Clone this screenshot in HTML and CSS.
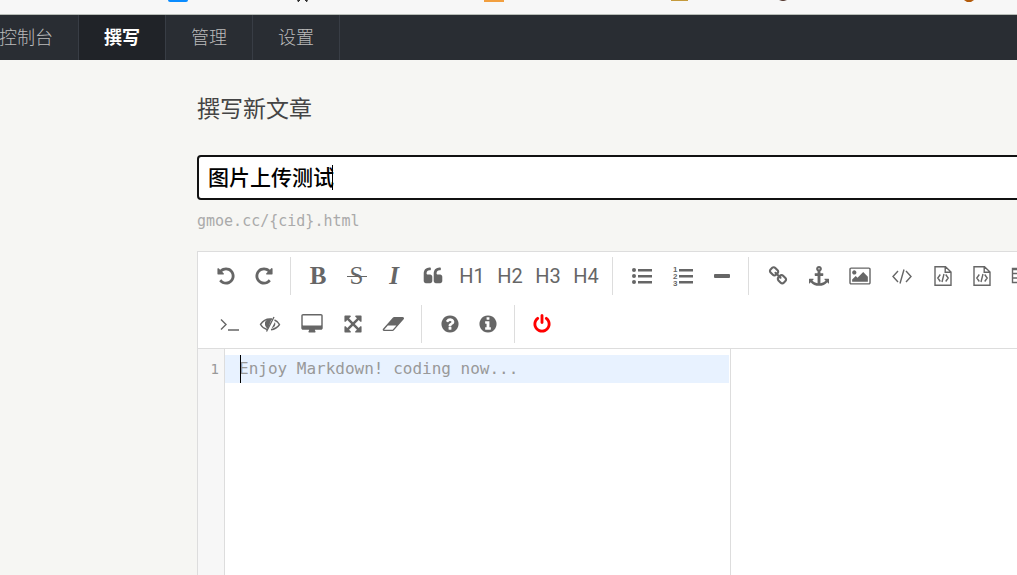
FILE: index.html
```html
<!DOCTYPE html>
<html lang="zh-CN">
<head>
<meta charset="utf-8">
<title>撰写新文章</title>
<link rel="stylesheet" href="styles.css">
</head>
<body>
<div class="bookmarks">
  <svg class="bookmarks-icons" aria-hidden="true">
    <path fill="#0a8cff" d="M168 0h20q0 2-2 2h-16q-2 0-2-2z"/>
    <path fill="#333" d="M297 0h3v1h-1v1h-1zM305 0h3l-1 2h-1v-1h-1z"/>
    <path fill="#f29f3f" d="M484 0h20v2h-20z"/>
    <path fill="#c49a3c" d="M671 0h17v1h-17z"/>
    <path fill="#5b4037" d="M779 0h8l-3 1h-2z"/>
    <path fill="#b35c0c" d="M964 0h10l-3 2h-4z"/>
  </svg>
</div>
<nav class="nav">
  <ul class="nav-list">
    <li><a class="nav-link" href="#">控制台</a></li>
    <li><a class="nav-link nav-link-active" href="#">撰写</a></li>
    <li><a class="nav-link" href="#">管理</a></li>
    <li><a class="nav-link" href="#">设置</a></li>
  </ul>
</nav>
<main class="main">
  <h1 class="page-title">撰写新文章</h1>
  <div class="title-field">
    <input class="title-input" type="text" aria-label="标题" value="图片上传测试">
    <span class="caret title-caret"></span>
  </div>
  <p class="permalink">gmoe.cc/{cid}.html</p>

  <section class="editor">
    <div class="toolbar">
      <div class="tool-row">
        <button class="tool" aria-label="撤销"><svg class="icon" viewBox="0 0 1792 1792"><path d="M1664 896q0 156-61 298t-164 245-245 164-298 61q-172 0-327-72.500t-264-204.500q-7-10-6.500-22.500t8.500-20.500l137-138q10-9 25-9 16 2 23 12 73 95 179 147t225 52q104 0 198.500-40.500t163.500-109.500 109.500-163.500 40.500-198.500-40.500-198.500-109.500-163.500-163.500-109.500-198.500-40.500q-98 0-188 35.500t-160 101.500l137 138q31 30 14 69-17 40-59 40h-448q-26 0-45-19t-19-45v-448q0-42 40-59 39-17 69 14l130 129q107-101 244.500-156.500t284.500-55.500q156 0 298 61t245 164 164 245 61 298z"/></svg></button>
        <button class="tool" aria-label="重做"><svg class="icon" viewBox="0 0 1792 1792"><path d="M1664 256v448q0 26-19 45t-45 19h-448q-42 0-59-40-17-39 14-69l138-138q-148-137-349-137-104 0-198.500 40.500t-163.500 109.500-109.500 163.500-40.500 198.500 40.500 198.500 109.500 163.500 163.500 109.500 198.500 40.500q119 0 225-52t179-147q7-10 23-12 15 0 25 9l137 137q9 8 9.500 20.500t-7.500 22.500q-109 132-264 204.500t-327 72.500q-156 0-298-61t-245-164-164-245-61-298 61-298 164-245 245-164 298-61q147 0 284.500 55.500t244.500 156.500l130-129q29-31 70-14 39 17 39 59z"/></svg></button>
        <span class="divider"></span>
        <button class="tool serif">B</button>
        <button class="tool tool-file serif serif-strike">S</button>
        <button class="tool tool-medium serif serif-italic">I</button>
        <button class="tool tool-wide" aria-label="引用"><svg class="icon" viewBox="0 0 1792 1792"><path d="M832 960v384q0 80-56 136t-136 56h-384q-80 0-136-56t-56-136v-704q0-104 40.500-198.500t109.500-163.500 163.500-109.500 198.500-40.500h64q26 0 45 19t19 45v128q0 26-19 45t-45 19h-64q-106 0-181 75t-75 181v32q0 40 28 68t68 28h224q80 0 136 56t56 136zm896 0v384q0 80-56 136t-136 56h-384q-80 0-136-56t-56-136v-704q0-104 40.500-198.500t109.500-163.500 163.500-109.500 198.500-40.500h64q26 0 45 19t19 45v128q0 26-19 45t-45 19h-64q-106 0-181 75t-75 181v32q0 40 28 68t68 28h224q80 0 136 56t56 136z"/></svg></button>
        <button class="tool">H1</button>
        <button class="tool">H2</button>
        <button class="tool">H3</button>
        <button class="tool">H4</button>
        <span class="divider"></span>
        <button class="tool tool-wide" aria-label="无序列表"><svg class="icon" viewBox="0 0 20 20"><circle cx="2" cy="4" r="2"/><circle cx="2" cy="10" r="2"/><circle cx="2" cy="16" r="2"/><path d="M6 3h14v2.500H6zM6 9h14v2.500H6zM6 15h14v2.500H6z"/></svg></button>
        <button class="tool tool-wide" aria-label="有序列表"><svg class="icon" viewBox="0 0 20 20"><text class="list-digit" x="0" y="6">1</text><text class="list-digit" x="0" y="13">2</text><text class="list-digit" x="0" y="20">3</text><path d="M6 3h14v2.500H6zM6 9h14v2.500H6zM6 15h14v2.500H6z"/></svg></button>
        <button class="tool" aria-label="横线"><svg class="icon" viewBox="0 0 20 20"><rect x="2" y="8" width="16" height="4" rx="1"/></svg></button>
        <span class="divider"></span>
        <button class="tool tool-wide" aria-label="链接"><svg class="icon" viewBox="0 0 1792 1792"><path d="M1520 1216q0-40-28-68l-208-208q-28-28-68-28-42 0-72 32 3 3 19 18.500t21.500 21.500 15 19 13 25.500 3.500 27.500q0 40-28 68t-68 28q-15 0-27.500-3.500t-25.500-13-19-15-21.500-21.500-18.500-19q-33 31-33 73 0 40 28 68l206 207q27 27 68 27 40 0 68-26l147-146q28-28 28-67zm-703-705q0-40-28-68l-206-207q-28-28-68-28-39 0-68 27l-147 146q-28 28-28 67 0 40 28 68l208 208q27 27 68 27 42 0 72-31-3-3-19-18.500t-21.500-21.500-15-19-13-25.500-3.500-27.500q0-40 28-68t68-28q15 0 27.500 3.500t25.500 13 19 15 21.500 21.500 18.500 19q33-31 33-73zm895 705q0 120-85 203l-147 146q-83 83-203 83-121 0-204-85l-206-207q-83-83-83-203 0-123 88-209l-88-88q-86 88-208 88-120 0-204-84l-208-208q-84-84-84-204t85-203l147-146q83-83 203-83 121 0 204 85l206 207q83 83 83 203 0 123-88 209l88 88q86-88 208-88 120 0 204 84l208 208q84 84 84 204z"/></svg></button>
        <button class="tool tool-wide" aria-label="锚点"><svg class="icon" viewBox="0 0 1792 1792"><path d="M960 256q0-26-19-45t-45-19-45 19-19 45 19 45 45 19 45-19 19-45zm832 928v352q0 22-20 30-8 2-12 2-12 0-23-9l-93-93q-119 143-318.500 226.500t-429.500 83.500-429.500-83.500-318.500-226.500l-93 93q-9 9-23 9-4 0-12-2-20-8-20-30v-352q0-14 9-23t23-9h352q22 0 30 20 8 19-7 35l-100 100q67 91 189.500 153.500t271.500 82.500v-647h-192q-26 0-45-19t-19-45v-128q0-26 19-45t45-19h192v-163q-58-34-93-92.500t-35-128.500q0-106 75-181t181-75 181 75 75 181q0 70-35 128.500t-93 92.500v163h192q26 0 45 19t19 45v128q0 26-19 45t-45 19h-192v647q149-20 271.500-82.500t189.500-153.500l-100-100q-15-16-7-35 8-20 30-20h352q14 0 23 9t9 23z"/></svg></button>
        <button class="tool tool-large" aria-label="图片"><svg class="icon icon-wide" viewBox="0 0 1920 1792"><path d="M640 576q0 80-56 136t-136 56-136-56-56-136 56-136 136-56 136 56 56 136zm1024 384v448h-1408v-192l320-320 160 160 512-512zm96-704h-1600q-13 0-22.500 9.500t-9.500 22.500v1216q0 13 9.500 22.500t22.500 9.500h1600q13 0 22.500-9.500t9.500-22.500v-1216q0-13-9.500-22.500t-22.500-9.500zm160 32v1216q0 66-47 113t-113 47h-1600q-66 0-113-47t-47-113v-1216q0-66 47-113t113-47h1600q66 0 113 47t47 113z"/></svg></button>
        <button class="tool tool-large" aria-label="代码"><svg class="icon icon-wide line" viewBox="0 0 22 20"><path d="M7 5L2 10.500 7 16M15 5l5 5.500L15 16M13 3.500L9 17.500"/></svg></button>
        <button class="tool tool-file" aria-label="代码块"><svg class="icon line" viewBox="0 0 20 20"><path d="M2 .8h10.500L18 6v13.300H2zM12.200 1v5.200H18M7.300 8.500L4.800 12l2.500 3.500M12.700 8.500l2.500 3.500-2.500 3.500M11 8l-2 8"/></svg></button>
        <button class="tool tool-file" aria-label="预格式文本"><svg class="icon line" viewBox="0 0 20 20"><path d="M2 .8h10.500L18 6v13.300H2zM12.200 1v5.200H18M7.300 8.500L4.800 12l2.500 3.500M12.700 8.500l2.500 3.500-2.500 3.500M11 8l-2 8"/></svg></button>
        <button class="tool tool-file" aria-label="表格"><svg class="icon line" viewBox="0 0 20 20"><path d="M1.500 2.500h17v14h-17zM1.500 3.500h17M1.500 7.500h17M1.500 12h17M7 3v13M13 3v13"/></svg></button>
      </div>
      <div class="tool-row">
        <button class="tool tool-large" aria-label="终端"><svg class="icon icon-wide line" viewBox="0 0 22 20"><path d="M4 5.500l5 5-5 5M11 16h11"/></svg></button>
        <button class="tool tool-large" aria-label="预览开关"><svg class="icon icon-wide line" viewBox="0 0 22 20"><path d="M8 15.500Q4 14.500 1.500 10.500 5 5 11 5h2M15.500 6q3.500 1.500 5 4.500-3 4.500-8.500 5.200M15 3L7.500 17.500"/><path class="fill" d="M12.500 5Q7 4.500 6 8.500 5.500 13 9 14.800zM16 8q1.500 4.500-3.500 6.500z"/></svg></button>
        <button class="tool tool-large" aria-label="桌面预览"><svg class="icon icon-wide" viewBox="0 0 1920 1792"><path d="M1792 992v-832q0-13-9.500-22.500t-22.500-9.500h-1600q-13 0-22.500 9.500t-9.500 22.500v832q0 13 9.500 22.500t22.500 9.500h1600q13 0 22.500-9.500t9.500-22.500zm128-832v1088q0 66-47 113t-113 47h-544q0 37 16 77.500t32 71 16 43.500q0 26-19 45t-45 19h-512q-26 0-45-19t-19-45q0-14 16-44t32-70 16-78h-544q-66 0-113-47t-47-113v-1088q0-66 47-113t113-47h1600q66 0 113 47t47 113z"/></svg></button>
        <button class="tool tool-file" aria-label="全屏"><svg class="icon" viewBox="0 0 1792 1792"><path d="M1411 541l-355 355 355 355 144-144q29-31 70-14 39 17 39 59v448q0 26-19 45t-45 19h-448q-42 0-59-40-17-39 14-69l144-144-355-355-355 355 144 144q31 30 14 69-17 40-59 40h-448q-26 0-45-19t-19-45v-448q0-42 40-59 39-17 69 14l144 144 355-355-355-355-144 144q-19 19-45 19-12 0-24-5-40-17-40-59v-448q0-26 19-45t45-19h448q42 0 59 40 17 39-14 69l-144 144 355 355 355-355-144-144q-31-30-14-69 17-40 59-40h448q26 0 45 19t19 45v448q0 42-39 59-13 5-25 5-26 0-45-19z"/></svg></button>
        <button class="tool tool-large" aria-label="清空"><svg class="icon icon-wide" viewBox="0 0 1984 1792"><path d="M960 1408l336-384h-768l-336 384h768zm1013-1077q15 34 9.500 71.500t-30.500 65.500l-896 1024q-38 44-96 44h-768q-38 0-69.500-20.500t-47.500-54.500q-15-34-9.500-71.500t30.500-65.500l896-1024q38-44 96-44h768q38 0 69.500 20.500t47.500 54.500z"/></svg></button>
        <span class="divider"></span>
        <button class="tool tool-file" aria-label="帮助"><svg class="icon" viewBox="0 0 1792 1792"><path d="M1024 1376v-192q0-14-9-23t-23-9h-192q-14 0-23 9t-9 23v192q0 14 9 23t23 9h192q14 0 23-9t9-23zm256-672q0-88-55.500-163t-138.500-116-170-41q-243 0-371 213-15 24 8 42l132 100q7 6 19 6 16 0 25-12 53-68 86-92 34-24 86-24 48 0 85.500 26t37.500 59q0 38-20 61t-68 45q-63 28-115.500 86.500t-52.500 125.500v36q0 14 9 23t23 9h192q14 0 23-9t9-23q0-19 21.500-49.500t54.500-49.500q32-18 49-28.500t46-35 44.500-48 28-60.500 12.500-81zm384 192q0 209-103 385.500t-279.500 279.500-385.500 103-385.500-103-279.500-279.500-103-385.500 103-385.500 279.500-279.500 385.500-103 385.500 103 279.500 279.500 103 385.500z"/></svg></button>
        <button class="tool" aria-label="关于"><svg class="icon" viewBox="0 0 1792 1792"><path d="M1152 1376v-160q0-14-9-23t-23-9h-96v-512q0-14-9-23t-23-9h-320q-14 0-23 9t-9 23v160q0 14 9 23t23 9h96v320h-96q-14 0-23 9t-9 23v160q0 14 9 23t23 9h448q14 0 23-9t9-23zm-128-896v-160q0-14-9-23t-23-9h-192q-14 0-23 9t-9 23v160q0 14 9 23t23 9h192q14 0 23-9t9-23zm640 416q0 209-103 385.500t-279.500 279.500-385.500 103-385.500-103-279.500-279.500-103-385.500 103-385.500 279.500-279.500 385.500-103 385.500 103 279.500 279.500 103 385.500z"/></svg></button>
        <span class="divider"></span>
        <button class="tool tool-power" aria-label="关闭编辑器"><svg class="icon" viewBox="0 0 1792 1792"><path d="M1664 896q0 156-61 298t-164 245-245 164-298 61-298-61-245-164-164-245-61-298q0-182 80.500-343t226.500-270q43-32 95.500-25t83.500 50q32 42 24.500 94.500t-49.500 84.500q-98 74-151.500 181t-53.500 228q0 104 40.500 198.500t109.500 163.500 163.500 109.500 198.500 40.500 198.500-40.500 163.500-109.500 109.500-163.500 40.500-198.500q0-121-53.500-228t-151.500-181q-42-32-49.500-84.500t24.500-94.500q31-43 84-50t95 25q146 109 226.500 270t80.500 343zm-640-768v640q0 52-38 90t-90 38-90-38-38-90v-640q0-52 38-90t90-38 90 38 38 90z"/></svg></button>
      </div>
    </div>
    <div class="panes">
      <div class="code-pane">
        <div class="gutter">1</div>
        <div class="code-line">
          <textarea class="code-input" rows="1" aria-label="正文" placeholder="Enjoy Markdown! coding now..."></textarea>
          <span class="caret code-caret"></span>
        </div>
      </div>
      <div class="preview-pane"></div>
    </div>
  </section>
</main>
</body>
</html>
```
FILE: styles.css
```css
* { box-sizing: border-box; }

html { height: 100%; }

body {
  margin: 0;
  height: 100%;
  display: flex;
  flex-direction: column;
  overflow: hidden;
  background: #f6f6f3;
  color: #444;
  font-family: Roboto, "Noto Sans CJK SC", sans-serif;
}

.bookmarks {
  flex: none;
  height: 15px;
  background: #f7f7f7;
  border-bottom: 1px solid #b8bdb8;
}

.bookmarks-icons {
  display: block;
  width: 100%;
  height: 14px;
}

.nav {
  flex: none;
  background: #292d33;
}

.nav-list {
  display: flex;
  margin: 0 0 0 -26px;
  padding: 0;
  list-style: none;
}

.nav-link {
  display: block;
  padding: 1px 25px 0;
  border-right: 1px solid #383d45;
  color: #bbb;
  font-size: 18px;
  font-weight: 300;
  line-height: 44px;
  text-decoration: none;
}

.nav-link-active {
  background: #202328;
  color: #fff;
  font-weight: 700;
}

.main {
  flex: 1;
  display: flex;
  flex-direction: column;
  margin: 0 -14px 0 197px;
  padding-top: 34px;
}

.page-title {
  margin: 0 0 29px;
  font-size: 23px;
  font-weight: 400;
  line-height: 32px;
}

.title-field { position: relative; }

.title-input {
  display: block;
  width: 100%;
  height: 45px;
  padding: 0 9px 3px;
  border: 2px solid #111;
  border-radius: 4px;
  outline: none;
  background: #fff;
  color: #000;
  font-family: "Noto Sans CJK SC", sans-serif;
  font-size: 21px;
  font-weight: 500;
}

.caret {
  position: absolute;
  width: 1px;
  background: #000;
}

.title-caret {
  left: 135px;
  top: 10px;
  height: 25px;
}

.permalink {
  margin: 11px 0 20px;
  color: #aaa;
  font-family: "DejaVu Sans Mono", monospace;
  font-size: 15px;
  line-height: 20px;
}

.editor {
  flex: 1;
  display: flex;
  flex-direction: column;
  border: 1px solid #ddd;
  border-width: 1px 0 0 1px;
  background: #fff;
}

.toolbar {
  padding-left: 9px;
  border-bottom: 1px solid #ddd;
}

.tool-row {
  display: flex;
  align-items: center;
  height: 48px;
  overflow: hidden;
}

.tool {
  flex: none;
  display: flex;
  align-items: center;
  justify-content: center;
  width: 38px;
  height: 38px;
  padding: 0;
  border: 0;
  background: none;
  color: #666;
  font-family: Roboto, sans-serif;
  font-size: 20px;
}

.tool-medium { width: 36px; }
.tool-file { width: 39px; }
.tool-wide { width: 41px; }
.tool-large { width: 42px; }
.tool-power { color: #f00; }

.serif {
  font-family: "Liberation Serif", serif;
  font-size: 25px;
  font-weight: 700;
}

.serif-strike {
  font-weight: 400;
  background: linear-gradient(#666, #666) center / 20px 1px no-repeat;
}

.serif-italic { font-style: italic; }

.icon {
  width: 20px;
  height: 20px;
  fill: currentColor;
  overflow: visible;
}

.icon-wide { width: 22px; }

.line {
  fill: none;
  stroke: currentColor;
  stroke-width: 1.4;
}

.line .fill {
  fill: currentColor;
  stroke: none;
}

.list-digit {
  font-family: "Liberation Sans", sans-serif;
  font-size: 8px;
  font-weight: 700;
}

.divider {
  flex: none;
  width: 1px;
  height: 38px;
  margin: 0 8px 0 7px;
  background: #ddd;
}

.panes {
  flex: 1;
  display: flex;
}

.code-pane {
  flex: 0 0 64%;
  display: flex;
  padding-right: 1px;
  border-right: 1px solid #ddd;
}

.gutter {
  width: 27px;
  padding: 6px 5px 0 0;
  border-right: 1px solid #ddd;
  background: #f7f7f7;
  color: #999;
  font-family: "DejaVu Sans Mono", monospace;
  font-size: 14px;
  line-height: 28px;
  text-align: right;
}

.code-line {
  position: relative;
  flex: 1;
  height: 28px;
  margin-top: 6px;
  background: #e8f2ff;
}

.code-input {
  display: block;
  width: 100%;
  height: 28px;
  padding: 0 0 0 14px;
  border: 0;
  outline: none;
  background: none;
  resize: none;
  overflow: hidden;
  font-family: "DejaVu Sans Mono", monospace;
  font-size: 16px;
  line-height: 28px;
}

.code-input::placeholder { color: #999; }

.code-caret {
  left: 15px;
  top: 0;
  height: 28px;
}

.preview-pane { flex: 1; }
```
